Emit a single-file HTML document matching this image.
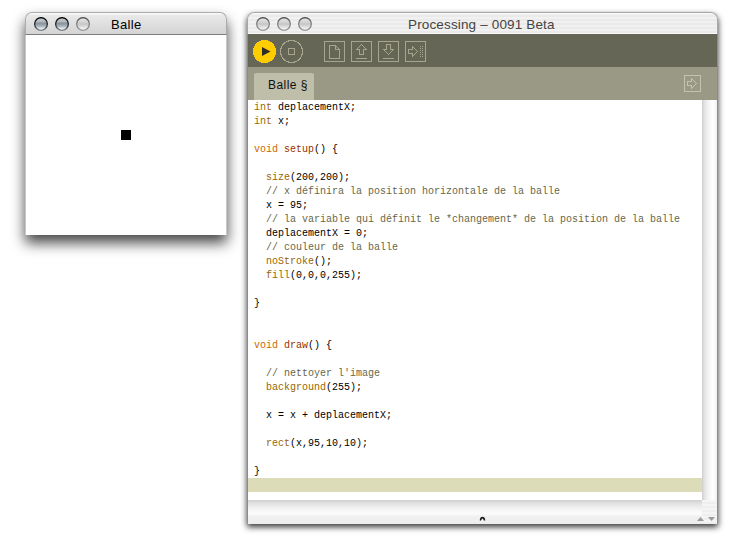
<!DOCTYPE html>
<html><head><meta charset="utf-8">
<style>
*{margin:0;padding:0;box-sizing:border-box}
html,body{width:741px;height:547px;overflow:hidden;background:#fff;position:relative;font-family:"Liberation Sans",sans-serif}
.a{position:absolute}
svg{position:absolute;overflow:visible}
.title{position:absolute;font-size:13px;color:#000;white-space:nowrap;line-height:16px}
/* left window */
#w1{left:25px;top:12px;width:202px;height:223px;border-radius:7px 7px 0 0;box-shadow:0 8px 14px rgba(0,0,0,0.72);background:#fff}
#w1tb{left:25px;top:12px;width:202px;height:23px;border-radius:7px 7px 0 0;border:1px solid #ababab;border-bottom:1px solid #7e7e7e;background:linear-gradient(#fafafa 0,#fafafa 1px,#e9e9e9 2px,#d4d4d4 100%)}
/* right window */
#w2{left:247px;top:12px;width:471px;height:512px;border-radius:7px 7px 0 0;box-shadow:0 3px 6px rgba(0,0,0,0.8);background:#fff}
#w2tb{left:247px;top:12px;width:471px;height:22px;border-radius:7px 7px 0 0;border:1px solid #a6a6a6;border-bottom:0;background:linear-gradient(#fbfbfb 0,#fbfbfb 1px,transparent 1px),linear-gradient(transparent 20px,#fafafa 20px),repeating-linear-gradient(#f1f1f1 0px,#f1f1f1 2px,#eaeaea 2px,#eaeaea 4px)}
.k1{color:#996600}.k2{color:#cc6600}.k3{color:#993300}.cm{color:#67674a}
.code{position:absolute;left:254px;top:101px;font-family:"Liberation Mono",monospace;font-size:10px;line-height:14px;white-space:pre;color:#000}
</style></head><body>

<!-- LEFT WINDOW -->
<div id="w1" class="a"></div>
<div id="w1tb" class="a"></div>
<div class="a" style="left:25px;top:35px;width:1px;height:200px;background:#c8c8c8"></div>
<div class="a" style="left:226px;top:35px;width:1px;height:200px;background:#c8c8c8"></div>
<div class="a" style="left:121px;top:130px;width:10px;height:10px;background:#000"></div>
<div class="title" style="left:111px;top:17px;letter-spacing:0.3px">Balle</div>


<!-- RIGHT WINDOW -->
<div id="w2" class="a"></div>
<div id="w2tb" class="a"></div>
<div class="title" style="left:408px;top:17px;font-size:13.5px;color:#444;letter-spacing:0.15px">Processing – 0091 Beta</div>
<div class="a" style="left:248px;top:34px;width:469px;height:33px;background:#666656"></div>
<div class="a" style="left:248px;top:67px;width:469px;height:33px;background:#999986"></div>
<div class="a" style="left:254px;top:73px;width:60px;height:27px;background:#bebea9;clip-path:polygon(2px 0,58px 0,60px 1px,60px 27px,0 27px,0 1px)"></div>
<div class="a" style="left:268px;top:78px;font-size:12px;color:#111;white-space:nowrap;line-height:15px;letter-spacing:0.45px">Balle §</div>
<!-- editor -->
<div class="a" style="left:248px;top:478px;width:454px;height:14px;background:#dcdcb9"></div>
<div class="code"><span class="k1">int</span> deplacementX;
<span class="k1">int</span> x;

<span class="k2">void</span> <span class="k3">setup</span>() {

  <span class="k1">size</span>(200,200);
  <span class="cm">// x définira la position horizontale de la balle</span>
  x = 95;
  <span class="cm">// la variable qui définit le *changement* de la position de la balle</span>
  deplacementX = 0;
  <span class="cm">// couleur de la balle</span>
  <span class="k1">noStroke</span>();
  <span class="k1">fill</span>(0,0,0,255);

}


<span class="k2">void</span> <span class="k3">draw</span>() {

  <span class="cm">// nettoyer l'image</span>
  <span class="k1">background</span>(255);

  x = x + deplacementX;

  <span class="k1">rect</span>(x,95,10,10);

}</div>
<!-- vertical scrollbar track -->
<div class="a" style="left:702px;top:100px;width:15px;height:400px;background:linear-gradient(90deg,#cfcfcf 0,#e6e6e6 3px,#f6f6f6 7px,#fff 11px,#f0f0f0 15px)"></div>
<!-- split divider -->
<div class="a" style="left:248px;top:500px;width:469px;height:24px;background:linear-gradient(#d0d0d0 0,#e4e4e4 4px,#f6f6f6 10px,#fcfcfc 14px,#f1f1f1 16px,#ececec 24px)"></div>
<div class="a" style="left:702px;top:500px;width:15px;height:24px;background:repeating-linear-gradient(#f4f4f4 0,#f4f4f4 2px,#eeeeee 2px,#eeeeee 4px)"></div>
<!-- borders -->
<div class="a" style="left:247px;top:34px;width:1px;height:490px;background:#8c8c8c"></div>
<div class="a" style="left:717px;top:34px;width:1px;height:490px;background:#8c8c8c"></div>

<!-- traffic lights -->
<svg width="0" height="0" style="position:absolute">
 <defs>
  <linearGradient id="gph" x1="0" y1="0" x2="0" y2="1">
   <stop offset="0" stop-color="#5c626a"/>
   <stop offset="0.12" stop-color="#c2c6cb"/>
   <stop offset="0.3" stop-color="#b4b9be"/>
   <stop offset="0.45" stop-color="#8a939c"/>
   <stop offset="0.65" stop-color="#a6afb8"/>
   <stop offset="0.88" stop-color="#e8eef4"/>
   <stop offset="1" stop-color="#f8fbfe"/>
  </linearGradient>
  <linearGradient id="gphs" x1="0" y1="0" x2="0" y2="1">
   <stop offset="0" stop-color="#000"/>
   <stop offset="0.55" stop-color="#1e2226"/>
   <stop offset="1" stop-color="#7a8086"/>
  </linearGradient>
  <linearGradient id="gin" x1="0" y1="0" x2="0" y2="1">
   <stop offset="0" stop-color="#b4b4b4"/>
   <stop offset="0.14" stop-color="#dedede"/>
   <stop offset="0.32" stop-color="#d6d6d6"/>
   <stop offset="0.5" stop-color="#c6c6c6"/>
   <stop offset="0.85" stop-color="#ededed"/>
   <stop offset="1" stop-color="#f6f6f6"/>
  </linearGradient>
  <linearGradient id="gins" x1="0" y1="0" x2="0" y2="1">
   <stop offset="0" stop-color="#4e4e4e"/>
   <stop offset="0.5" stop-color="#7a7a7a"/>
   <stop offset="1" stop-color="#9a9a9a"/>
  </linearGradient>
 </defs>
</svg>
<svg style="left:34px;top:17px" width="14" height="14"><circle cx="7" cy="7" r="6.35" fill="url(#gph)" stroke="url(#gphs)" stroke-width="1.25"/></svg>
<svg style="left:55px;top:17px" width="14" height="14"><circle cx="7" cy="7" r="6.35" fill="url(#gph)" stroke="url(#gphs)" stroke-width="1.25"/></svg>
<svg style="left:76px;top:17px" width="14" height="14"><circle cx="7" cy="7" r="6.35" fill="url(#gin)" stroke="url(#gins)" stroke-width="1.2"/></svg>
<svg style="left:256px;top:17px" width="14" height="14"><circle cx="7" cy="7" r="6.35" fill="url(#gin)" stroke="url(#gins)" stroke-width="1.2"/></svg>
<svg style="left:277px;top:17px" width="14" height="14"><circle cx="7" cy="7" r="6.35" fill="url(#gin)" stroke="url(#gins)" stroke-width="1.2"/></svg>
<svg style="left:298px;top:17px" width="14" height="14"><circle cx="7" cy="7" r="6.35" fill="url(#gin)" stroke="url(#gins)" stroke-width="1.2"/></svg>


<!-- overlay icons -->
<svg style="left:0;top:0" width="741" height="547" viewBox="0 0 741 547">
 <circle cx="264.5" cy="51.5" r="11.6" fill="#ffcc00" shape-rendering="crispEdges"/>
 <path d="M262,47 L270.5,51.5 L262,56 Z" fill="#2e2e26"/>
 <g fill="none" stroke="#a6a68e" stroke-width="1" shape-rendering="crispEdges">
  <circle cx="291.5" cy="51.5" r="11"/>
  <rect x="288.5" y="48.5" width="6" height="6"/>
  <rect x="324.5" y="41.5" width="20" height="20"/>
  <path d="M329.5,45.5 H335.5 L339.5,49.5 V58.5 H329.5 Z M335.5,45.5 V49.5 H339.5"/>
  <rect x="351.5" y="41.5" width="20" height="20"/>
  <path d="M361.5,44.5 L366.5,49.5 H363.5 V54.5 H359.5 V49.5 H356.5 Z M356,58.5 H367"/>
  <rect x="378.5" y="41.5" width="20" height="20"/>
  <path d="M386.5,44.5 H390.5 V49.5 H393.5 L388.5,54.5 L383.5,49.5 H386.5 Z M383,58.5 H394"/>
  <rect x="405.5" y="41.5" width="20" height="20"/>
  <path d="M408.5,49.5 H412.5 V46.5 L417.5,51.5 L412.5,56.5 V53.5 H408.5 Z"/>
 </g>
 <g fill="#a6a68e" shape-rendering="crispEdges">
  <rect x="420" y="46" width="1" height="1"/><rect x="422" y="46" width="1" height="1"/>
  <rect x="420" y="48" width="1" height="1"/><rect x="422" y="48" width="1" height="1"/>
  <rect x="420" y="50" width="1" height="1"/><rect x="422" y="50" width="1" height="1"/>
  <rect x="420" y="52" width="1" height="1"/><rect x="422" y="52" width="1" height="1"/>
  <rect x="420" y="54" width="1" height="1"/><rect x="422" y="54" width="1" height="1"/>
  <rect x="420" y="56" width="1" height="1"/><rect x="422" y="56" width="1" height="1"/>
 </g>
 <g fill="none" stroke="#c2c2ae" stroke-width="1" shape-rendering="crispEdges">
  <rect x="684.5" y="75.5" width="16" height="16"/>
  <path d="M687.5,81.5 H691.5 V78.5 L696.5,83.5 L691.5,88.5 V85.5 H687.5 Z"/>
 </g>
 <path d="M480.6,520.6 A1.9,3 0 0 1 484.4,520.6" fill="none" stroke="#1e1e1e" stroke-width="1.7"/><path d="M481.4,521.3 A1.1,1.6 0 0 1 483.6,521.3 Z" fill="#fff"/>
 <path d="M697,521 L700.5,517 L704,521 Z" fill="#9c9c9c"/>
 <path d="M708,517 L711.5,521 L715,517 Z" fill="#9c9c9c"/>
</svg>
</body></html>
